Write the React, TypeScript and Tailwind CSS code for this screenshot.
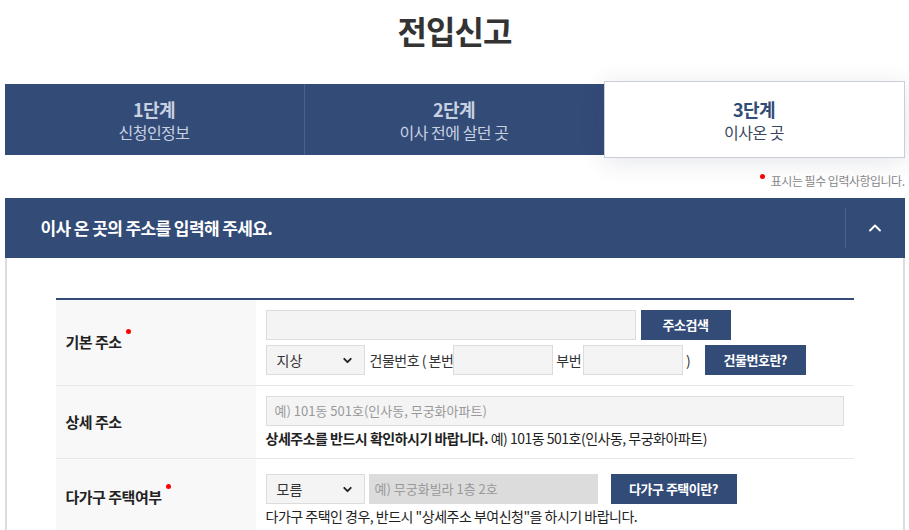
import { ChevronUp, ChevronDown } from 'lucide-react';

const FONT = { fontFamily: '"Noto Sans CJK KR", "Noto Sans", sans-serif' };

function Label({ text, required }: { text: string; required?: boolean }) {
  return (
    <div className="w-[200px] bg-[#f8f8f8] flex items-center pl-[10px] text-[15px] font-bold tracking-[-0.5px] text-[#222]">
      <span className="relative">
        {text}
        {required && <span className="absolute -right-[9px] -top-[2px] w-[5px] h-[5px] rounded-full bg-[#ff0000]" />}
      </span>
    </div>
  );
}

function Select({ value }: { value: string }) {
  return (
    <div className="w-[99px] h-[30px] bg-[#f4f4f4] border border-[#dcdcdc] flex items-center justify-between px-2.5 text-[14px] text-[#333]">
      <span>{value}</span>
      <ChevronDown size={13} strokeWidth={3.5} className="text-[#222]" />
    </div>
  );
}

function Btn({ label, w }: { label: string; w: string }) {
  return (
    <button className={`${w} h-[30px] bg-[#334b77] text-white text-[13px] font-bold tracking-[-0.5px]`}>
      {label}
    </button>
  );
}

export default function App() {
  return (
    <div className="min-h-screen bg-white text-[#333]" style={FONT}>
      <div className="w-[900px] mx-auto">
        {/* Title */}
        <h1 className="text-center text-[32px] font-bold text-[#333] tracking-[-1px] pt-[6px] leading-[48px]">전입신고</h1>

        {/* Steps */}
        <div className="mt-[27px] flex items-center h-[77px]">
          <div className="flex-1 h-[71px] bg-[#334b77] flex flex-col items-center justify-center text-[#c9d1e1] border-r border-[#4a6190]">
            <div className="text-[18px] font-bold leading-[24px] tracking-[-0.5px]">1단계</div>
            <div className="text-[16px] leading-[22px] tracking-[-0.5px]">신청인정보</div>
          </div>
          <div className="flex-1 h-[71px] bg-[#334b77] flex flex-col items-center justify-center text-[#c9d1e1]">
            <div className="text-[18px] font-bold leading-[24px] tracking-[-0.5px]">2단계</div>
            <div className="text-[16px] leading-[22px] tracking-[-0.5px]">이사 전에 살던 곳</div>
          </div>
          <div className="flex-1 h-[77px] bg-white border border-[#c8cdd8] shadow-[0_4px_24px_rgba(40,50,80,0.12)] flex flex-col items-center justify-center text-[#334b77]">
            <div className="text-[18px] font-bold leading-[24px] tracking-[-0.5px]">3단계</div>
            <div className="text-[16px] leading-[22px] tracking-[-0.5px] text-[#3a4660]">이사온 곳</div>
          </div>
        </div>

        {/* Required note */}
        <div className="flex justify-end items-center h-[40px] pt-[6px] text-[12px] text-[#888] tracking-[-0.5px]">
          <span className="w-[5px] h-[5px] rounded-full bg-[#ff0000] -mt-[10px] mr-[6px]" />
          표시는 필수 입력사항입니다.
        </div>

        {/* Section header */}
        <div className="h-[60px] bg-[#334b77] flex items-center justify-between">
          <div className="pl-[36px] text-white text-[17px] font-bold tracking-[-0.6px]">이사 온 곳의 주소를 입력해 주세요.</div>
          <div className="h-[40px] border-l border-[#4d6390] w-[60px] flex items-center justify-center">
            <ChevronUp size={20} strokeWidth={2.25} className="text-white" />
          </div>
        </div>

        {/* Content */}
        <div className="border-x-2 border-[#dcdcdc] px-[49px] pt-[40px]">
          <div className="border-t-2 border-[#334b77] text-[14px]">
            {/* Row 1 */}
            <div className="flex border-b border-[#e8e8e8]">
              <Label text="기본 주소" required />
              <div className="flex-1 pl-[10px] py-[10px] flex flex-col gap-[5px]">
                <div className="flex items-center gap-[5px]">
                  <div className="w-[370px] h-[30px] bg-[#f4f4f4] border border-[#dcdcdc]" />
                  <Btn label="주소검색" w="w-[90px]" />
                </div>
                <div className="flex items-center">
                  <Select value="지상" />
                  <span className="ml-[5px] text-[14px] tracking-[-0.5px]">건물번호 ( 본번</span>
                  <div className="w-[100px] h-[30px] bg-[#f4f4f4] border border-[#dcdcdc]" />
                  <span className="ml-[3px] mr-[2px] tracking-[-0.5px]">부번</span>
                  <div className="w-[100px] h-[30px] bg-[#f4f4f4] border border-[#dcdcdc]" />
                  <span className="ml-[3px]">)</span>
                  <div className="ml-[14px]"><Btn label="건물번호란?" w="w-[101px]" /></div>
                </div>
              </div>
            </div>

            {/* Row 2 */}
            <div className="flex border-b border-[#e8e8e8]">
              <Label text="상세 주소" />
              <div className="flex-1 pl-[10px] pr-[10px] pt-[10px] pb-[10px] flex flex-col gap-[2px]">
                <div className="h-[30px] bg-[#f4f4f4] border border-[#dcdcdc] flex items-center px-[8px] text-[13px] text-[#999]">
                  예) 101동 501호(인사동, 무궁화아파트)
                </div>
                <div className="text-[14px] leading-[20px] tracking-[-0.5px] text-[#222]">
                  <span className="font-bold">상세주소를 반드시 확인하시기 바랍니다.</span> 예) 101동 501호(인사동, 무궁화아파트)
                </div>
              </div>
            </div>

            {/* Row 3 */}
            <div className="flex">
              <Label text="다가구 주택여부" required />
              <div className="flex-1 pl-[10px] pt-[15px] pb-[10px] flex flex-col gap-[2px]">
                <div className="flex items-center">
                  <Select value="모름" />
                  <div className="ml-[4px] w-[229px] h-[30px] bg-[#dcdcdc] flex items-center px-[6px] text-[13px] text-[#999]">
                    예) 무궁화빌라 1층 2호
                  </div>
                  <div className="ml-[13px]"><Btn label="다가구 주택이란?" w="w-[126px]" /></div>
                </div>
                <div className="text-[14px] leading-[20px] tracking-[-0.5px] text-[#222]">
                  다가구 주택인 경우, 반드시 "상세주소 부여신청"을 하시기 바랍니다.
                </div>
              </div>
            </div>
          </div>
        </div>
      </div>
    </div>
  );
}
